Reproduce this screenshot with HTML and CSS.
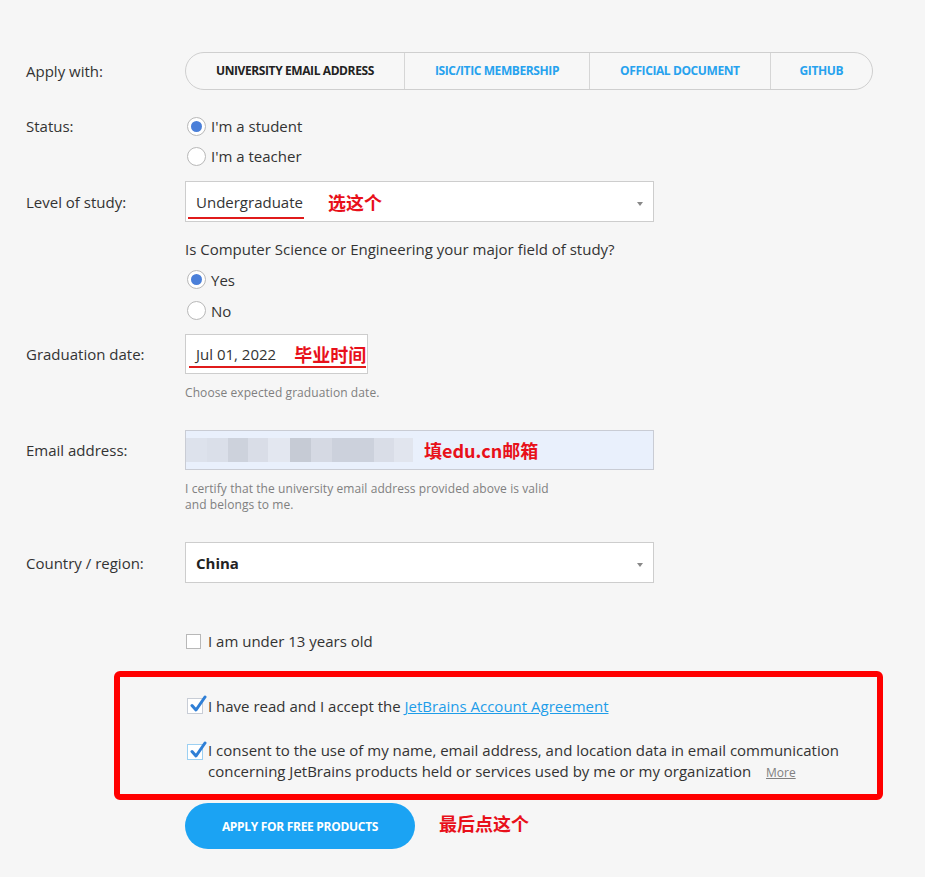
FILE: index.html
```html
<!DOCTYPE html>
<html>
<head>
<meta charset="utf-8">
<link rel="stylesheet" href="styles.css">
</head>
<body>
<div class="form">
  <div class="row row-tabs">
    <div class="label">Apply with:</div>
    <div class="tabs">
      <div class="tab active">UNIVERSITY EMAIL ADDRESS</div>
      <div class="tab">ISIC/ITIC MEMBERSHIP</div>
      <div class="tab">OFFICIAL DOCUMENT</div>
      <div class="tab">GITHUB</div>
    </div>
  </div>

  <div class="row row-status">
    <div class="label label-top">Status:</div>
    <div class="radios">
      <div class="radio-row"><span class="radio checked"></span>I'm a student</div>
      <div class="radio-row"><span class="radio"></span>I'm a teacher</div>
    </div>
  </div>

  <div class="row row-level">
    <div class="label">Level of study:</div>
    <div class="select">
      <span class="select-value underlined">Undergraduate</span>
      <span class="note note-level">选这个</span>
      <span class="arrow"></span>
    </div>
  </div>

  <div class="row row-question">
    <div class="label"></div>
    <div>
      <div class="question">Is Computer Science or Engineering your major field of study?</div>
      <div class="radio-row radio-row-tall"><span class="radio checked"></span>Yes</div>
      <div class="radio-row radio-row-tall"><span class="radio"></span>No</div>
    </div>
  </div>

  <div class="row row-grad">
    <div class="label">Graduation date:</div>
    <div class="date">
      <span class="select-value">Jul 01, 2022</span>
      <span class="note note-date">毕业时间</span>
      <span class="date-line"></span>
    </div>
  </div>
  <div class="row row-help1">
    <div class="label"></div>
    <div class="help">Choose expected graduation date.</div>
  </div>

  <div class="row row-email">
    <div class="label">Email address:</div>
    <div class="email">
      <div class="blur">
        <span class="b b1"></span><span class="b b2"></span><span class="b b3"></span><span class="b b4"></span><span class="b b5"></span><span class="b b6"></span><span class="b b7"></span><span class="b b8"></span><span class="b b9"></span><span class="b b10"></span>
      </div>
      <span class="note note-email">填edu.cn邮箱</span>
    </div>
  </div>
  <div class="row row-help2">
    <div class="label"></div>
    <div class="help help2">I certify that the university email address provided above is valid<br>and belongs to me.</div>
  </div>

  <div class="row row-country">
    <div class="label">Country / region:</div>
    <div class="select">
      <span class="select-value bold">China</span>
      <span class="arrow"></span>
    </div>
  </div>

  <div class="row row-under">
    <div class="label"></div>
    <div class="check-row"><span class="box"></span>I am under 13 years old</div>
  </div>

  <div class="redbox">
    <div class="check-row check-row1">
      <span class="box box-checked">
        <svg viewBox="0 0 18 20" width="18" height="20"><path d="M3 11.5 L7 16 L16 3" fill="none" stroke="#2f7fd6" stroke-width="3" stroke-linecap="round" stroke-linejoin="round"/></svg>
      </span>
      <span>I have read and I accept the <a class="link">JetBrains Account Agreement</a></span>
    </div>
    <div class="check-row check-row2">
      <span class="box box-checked box-focus">
        <svg viewBox="0 0 18 20" width="18" height="20"><path d="M3 11.5 L7 16 L16 3" fill="none" stroke="#2f7fd6" stroke-width="3" stroke-linecap="round" stroke-linejoin="round"/></svg>
      </span>
      <span>I consent to the use of my name, email address, and location data in email communication<br>concerning JetBrains products held or services used by me or my organization <a class="more">More</a></span>
    </div>
  </div>

  <div class="row row-button">
    <div class="label"></div>
    <div class="btn-line">
      <div class="button">APPLY FOR FREE PRODUCTS</div>
      <span class="note note-btn">最后点这个</span>
    </div>
  </div>
</div>
</body>
</html>
```

FILE: styles.css
```css
html, body {
  margin: 0;
  padding: 0;
  background: #f6f6f6;
}
body {
  font-family: "Open Sans", "Noto Sans", sans-serif;
  font-size: 15px;
  color: #333;
  width: 925px;
  height: 877px;
  overflow: hidden;
}
.form {
  padding: 52px 0 0 26px;
  display: flex;
  flex-direction: column;
}
.row {
  display: grid;
  grid-template-columns: 159px auto;
  align-items: center;
}
.label {
  color: #333;
  font-size: 15px;
  line-height: 20px;
}
.label-top { align-self: start; margin-top: 5px; }

/* tabs */
.tabs {
  display: flex;
  width: 686px;
  height: 36px;
  border: 1px solid #cfcfcf;
  border-radius: 19px;
  overflow: hidden;
  background: #f7f7f7;
}
.tab {
  padding: 0 30px;
  display: flex;
  align-items: center;
  justify-content: center;
  font-size: 12px;
  font-weight: 700;
  letter-spacing: -0.4px;
  color: #27a2ee;
  border-left: 1px solid #d6d6d6;
  white-space: nowrap;
  padding-bottom: 1px;
}
.tab:first-child { border-left: none; }
.tab:last-child { flex: 1; padding: 0 0 1px 0; }
.tab.active { color: #222; }

/* radios */
.row-status { margin-top: 21px; }
.radio-row {
  height: 30px;
  display: flex;
  align-items: center;
  color: #333;
}
.radio-row-tall { height: 31px; }
.radio {
  width: 17px;
  height: 17px;
  border: 1px solid #b8b8b8;
  border-radius: 50%;
  background: #fff;
  margin: 0 5px 0 2px;
  position: relative;
  box-sizing: content-box;
}
.radio.checked::after {
  content: "";
  position: absolute;
  left: 3px;
  top: 3px;
  width: 11px;
  height: 11px;
  border-radius: 50%;
  background: #4a7fd9;
}

/* selects */
.row-level { margin-top: 10px; }
.select {
  height: 39px;
  border: 1px solid #cdcdcd;
  background: #fff;
  display: flex;
  align-items: center;
  padding-left: 10px;
  position: relative;
  box-sizing: content-box;
  width: 457px;
}
.select-value {
  color: #333;
  font-size: 15px;
  position: relative;
}
.select-value.bold { font-weight: 700; color: #222; }
.underlined::after {
  content: "";
  position: absolute;
  left: -8px;
  right: -1px;
  bottom: -7px;
  height: 2px;
  background: #e01b1b;
}
.arrow {
  position: absolute;
  right: 10px;
  top: 20px;
  width: 0;
  height: 0;
  border-left: 3.5px solid transparent;
  border-right: 3.5px solid transparent;
  border-top: 4px solid #888;
}
.note {
  font-family: "Noto Sans CJK SC", sans-serif;
  font-weight: 700;
  font-size: 18px;
  color: #e8101a;
  line-height: 20px;
}
.note-level { margin-left: 25px; }

/* question */
.row-question { margin-top: 17px; }
.question { line-height: 20px; margin-bottom: 5px; color: #333; }

/* date */
.row-grad { margin-top: 8px; }
.date {
  width: 171px;
  height: 38px;
  border: 1px solid #cdcdcd;
  background: #fff;
  display: flex;
  align-items: center;
  padding-left: 10px;
  position: relative;
  box-sizing: content-box;
  overflow: hidden;
}
.note-date { margin-left: 18px; font-size: 18px; }
.date-line {
  position: absolute;
  left: 3px;
  right: 1px;
  bottom: 5px;
  height: 2px;
  background: #e01b1b;
}
.help {
  font-size: 12px;
  letter-spacing: 0.08px;
  color: #808080;
  line-height: 18px;
}
.row-help1 { margin-top: 10px; }

/* email */
.row-email { margin-top: 28px; }
.email {
  width: 467px;
  height: 38px;
  border: 1px solid #c9ccd4;
  background: #e9f0fc;
  display: flex;
  align-items: center;
  box-sizing: content-box;
}
.blur { display: flex; height: 24px; }
.b { display: block; height: 24px; }
.b1 { width: 21px; background: #dde2ec; }
.b2 { width: 21px; background: #dadfe9; }
.b3 { width: 20px; background: #cdd2dc; }
.b4 { width: 20px; background: #d9dde7; }
.b5 { width: 22px; background: #e3e7f0; }
.b6 { width: 21px; background: #c6cbd5; }
.b7 { width: 21px; background: #d5d9e3; }
.b8 { width: 42px; background: #ccd1dc; }
.b9 { width: 20px; background: #d9dde7; }
.b10 { width: 19px; background: #e1e5ee; }
.note-email { margin-left: 11px; }
.row-help2 { margin-top: 11px; }
.help2 { line-height: 16px; }

/* country */
.row-country { margin-top: 29px; }

/* checkboxes */
.row-under { margin-top: 48px; }
.check-row {
  display: flex;
  align-items: center;
  line-height: 20px;
  color: #333;
}
.box {
  width: 13px;
  height: 13px;
  border: 1px solid #b8b8b8;
  background: #fff;
  margin: 0 7px 0 1px;
  position: relative;
  flex: none;
}
.box-checked { border-color: #c8cdd6; width: 14px; height: 14px; margin-right: 5px; }
.box-focus { border-color: #9cd0f2; }
.box svg {
  position: absolute;
  left: 1px;
  top: -5px;
}
.redbox {
  margin-top: 20px;
  margin-left: 88px;
  width: 691px;
  height: 117px;
  border: 6px solid #ff0000;
  border-radius: 6px;
  padding-left: 66px;
  box-sizing: content-box;
  display: flex;
  flex-direction: column;
}
.check-row1 { margin-top: 19px; }
.check-row2 { margin-top: 24px; align-items: flex-start; line-height: 21px; }
.check-row2 .box { margin-top: 4px; }
.link {
  color: #1e9de9;
  text-decoration: underline;
}
.more {
  font-size: 12px;
  color: #808080;
  text-decoration: underline;
  margin-left: 11px;
}

/* button */
.row-button { margin-top: 3px; }
.btn-line { display: flex; align-items: center; }
.button {
  width: 230px;
  height: 46px;
  border-radius: 23px;
  background: #1ba3f3;
  color: #fff;
  font-size: 12px;
  font-weight: 700;
  letter-spacing: -0.3px;
  display: flex;
  align-items: center;
  justify-content: center;
}
.note-btn { margin-left: 24px; margin-top: -6px; }
```
